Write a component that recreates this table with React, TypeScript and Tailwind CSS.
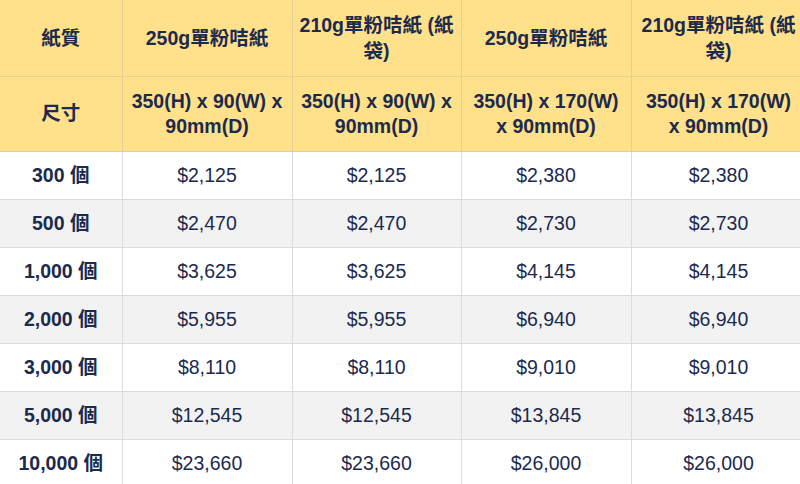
import React from 'react';

const papers = ['250g單粉咭紙', '210g單粉咭紙 (紙袋)', '250g單粉咭紙', '210g單粉咭紙 (紙袋)'];
const sizes = [
  '350(H) x 90(W) x 90mm(D)',
  '350(H) x 90(W) x 90mm(D)',
  '350(H) x 170(W) x 90mm(D)',
  '350(H) x 170(W) x 90mm(D)',
];

const rows = [
  { qty: '300 個', prices: ['$2,125', '$2,125', '$2,380', '$2,380'] },
  { qty: '500 個', prices: ['$2,470', '$2,470', '$2,730', '$2,730'] },
  { qty: '1,000 個', prices: ['$3,625', '$3,625', '$4,145', '$4,145'] },
  { qty: '2,000 個', prices: ['$5,955', '$5,955', '$6,940', '$6,940'] },
  { qty: '3,000 個', prices: ['$8,110', '$8,110', '$9,010', '$9,010'] },
  { qty: '5,000 個', prices: ['$12,545', '$12,545', '$13,845', '$13,845'] },
  { qty: '10,000 個', prices: ['$23,660', '$23,660', '$26,000', '$26,000'] },
];

export default function App() {
  return (
    <div
      className="w-[800px] h-[484px] overflow-hidden bg-white text-[#1b2a4d]"
      style={{ fontFamily: '"Liberation Sans", Arial, "Noto Sans CJK TC", sans-serif' }}
    >
      <table className="w-[806px] table-fixed border-collapse text-[19.5px] leading-[25px] text-center">
        <colgroup>
          <col className="w-[122px]" />
          <col className="w-[170px]" />
          <col className="w-[169px]" />
          <col className="w-[170px]" />
          <col className="w-[175px]" />
        </colgroup>
        <thead>
          <tr className="h-[76px] bg-[#ffe08b] leading-[26px]">
            <th className="border border-t-0 border-l-0 border-[#e3cf93] px-[7px] font-bold">紙質</th>
            {papers.map((p, i) => (
              <th key={i} className="border border-t-0 border-[#e3cf93] px-[7px] font-bold">
                {p}
              </th>
            ))}
          </tr>
          <tr className="h-[75px] bg-[#ffe08b]">
            <th className="border border-l-0 border-[#e3cf93] px-[7px] font-bold">尺寸</th>
            {sizes.map((s, i) => (
              <th key={i} className="border border-[#e3cf93] px-[7px] font-bold">
                {s}
              </th>
            ))}
          </tr>
        </thead>
        <tbody>
          {rows.map((r, i) => (
            <tr key={r.qty} className={`h-[48px] ${i % 2 === 1 ? 'bg-[#f2f2f2]' : 'bg-white'}`}>
              <td className="border border-l-0 border-[#dcdcdc] px-[7px] font-bold">{r.qty}</td>
              {r.prices.map((p, j) => (
                <td key={j} className="border border-[#dcdcdc] px-[7px]">
                  {p}
                </td>
              ))}
            </tr>
          ))}
        </tbody>
      </table>
    </div>
  );
}
